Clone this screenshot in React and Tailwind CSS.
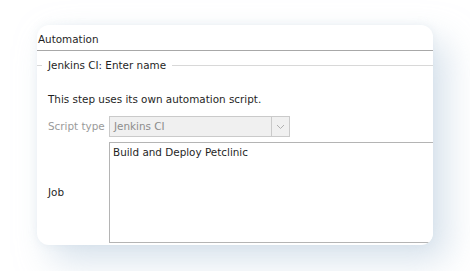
import React from 'react';

const App = () => {
  return (
    <div className="w-[470px] h-[271px] bg-white overflow-hidden pt-[25px] pl-[37px] font-['DejaVu_Sans',Verdana,sans-serif] text-[10.4px] text-[#1f1f1f]">
      {/* Card */}
      <div className="w-[396px] h-[220px] bg-white rounded-[12px] overflow-hidden shadow-[14px_16px_34px_rgba(188,206,224,0.6),0_0_10px_rgba(222,230,238,0.45)]">
        {/* Header */}
        <div className="h-[26px] pt-[8px] pl-[1px] leading-[13px] border-b border-[#a8a8a8]">Automation</div>

        {/* Group legend */}
        <div className="flex items-center h-[28px]">
          <div className="w-[5px] h-px bg-[#d8d8d8]"></div>
          <span className="px-[6px] leading-[13px]">Jenkins CI: Enter name</span>
          <div className="flex-1 h-px bg-[#d8d8d8]"></div>
        </div>

        <div className="pl-[11px]">
          <p className="mt-[14px] leading-[13px]">This step uses its own automation script.</p>

          {/* Script type */}
          <div className="flex items-center mt-[10px]">
            <span className="w-[61px] text-[#9a9a9a] leading-[13px]">Script type</span>
            <div className="flex w-[181px] h-[21px] border border-[#cacaca] bg-[#f0f0f0]">
              <span className="flex-1 pl-[4px] leading-[19px] text-[#8c8c8c]">Jenkins CI</span>
              <div className="w-[18px] border-l border-[#cacaca] flex items-center justify-center">
                <svg width="9" height="6" viewBox="0 0 9 6">
                  <path d="M1 1 L4.5 4.5 L8 1" fill="none" stroke="#b0b0b0" strokeWidth="1" />
                </svg>
              </div>
            </div>
          </div>

          {/* Job */}
          <div className="flex items-center mt-[5px]">
            <span className="w-[61px] leading-[13px]">Job</span>
            <div className="flex-1 h-[101px] border border-[#b4b4b4] border-r-0 bg-white pl-[3px] pt-[3px] leading-[13px]">
              Build and Deploy Petclinic
            </div>
          </div>
        </div>
      </div>
    </div>
  );
};

export default App;
